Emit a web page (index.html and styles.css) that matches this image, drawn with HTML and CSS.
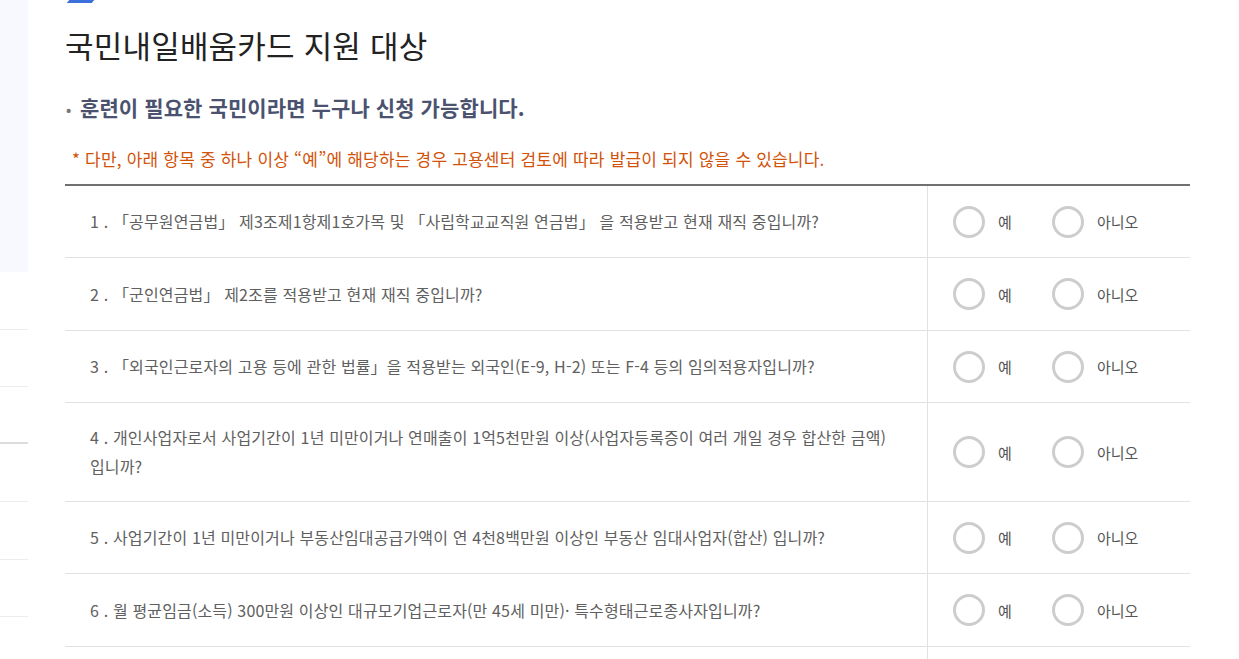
FILE: index.html
```html
<!DOCTYPE html>
<html lang="ko">
<head>
<meta charset="utf-8">
<title>국민내일배움카드 지원 대상</title>
<link rel="stylesheet" href="styles.css">
</head>
<body>
<div class="page">
  <aside class="side">
    <div class="side-top"></div>
    <div class="side-item"></div>
    <div class="side-item side-item--short"></div>
    <div class="side-item side-item--strong"></div>
    <div class="side-item"></div>
    <div class="side-item"></div>
    <div class="side-item side-item--short"></div>
    <div class="side-item"></div>
  </aside>
  <main class="main">
    <div class="deco"></div>
    <h1 class="title">국민내일배움카드 지원 대상</h1>
    <p class="lead"><span class="dot">•</span>훈련이 필요한 국민이라면 누구나 신청 가능합니다.</p>
    <p class="note">* 다만, 아래 항목 중 하나 이상 “예”에 해당하는 경우 고용센터 검토에 따라 발급이 되지 않을 수 있습니다.</p>
    <div class="table">
      <div class="row">
        <div class="q">1 . 「공무원연금법」 제3조제1항제1호가목 및 「사립학교교직원 연금법」 을 적용받고 현재 재직 중입니까?</div>
        <div class="a"><label class="opt"><span class="circle"></span>예</label><label class="opt"><span class="circle"></span>아니오</label></div>
      </div>
      <div class="row row--tall">
        <div class="q">2 . 「군인연금법」 제2조를 적용받고 현재 재직 중입니까?</div>
        <div class="a"><label class="opt"><span class="circle"></span>예</label><label class="opt"><span class="circle"></span>아니오</label></div>
      </div>
      <div class="row">
        <div class="q">3 . 「외국인근로자의 고용 등에 관한 법률」을 적용받는 외국인(E-9, H-2) 또는 F-4 등의 임의적용자입니까?</div>
        <div class="a"><label class="opt"><span class="circle"></span>예</label><label class="opt"><span class="circle"></span>아니오</label></div>
      </div>
      <div class="row">
        <div class="q">4 . 개인사업자로서 사업기간이 1년 미만이거나 연매출이 1억5천만원 이상(사업자등록증이 여러 개일 경우 합산한 금액) 입니까?</div>
        <div class="a"><label class="opt"><span class="circle"></span>예</label><label class="opt"><span class="circle"></span>아니오</label></div>
      </div>
      <div class="row">
        <div class="q">5 . 사업기간이 1년 미만이거나 부동산임대공급가액이 연 4천8백만원 이상인 부동산 임대사업자(합산) 입니까?</div>
        <div class="a"><label class="opt"><span class="circle"></span>예</label><label class="opt"><span class="circle"></span>아니오</label></div>
      </div>
      <div class="row row--tall">
        <div class="q">6 . 월 평균임금(소득) 300만원 이상인 대규모기업근로자(만 45세 미만)· 특수형태근로종사자입니까?</div>
        <div class="a"><label class="opt"><span class="circle"></span>예</label><label class="opt"><span class="circle"></span>아니오</label></div>
      </div>
      <div class="row">
        <div class="q">7 . 월 평균임금(소득) 250만원 이상인 중소기업 근로자(만 45세 미만) 입니까?</div>
        <div class="a"><label class="opt"><span class="circle"></span>예</label><label class="opt"><span class="circle"></span>아니오</label></div>
      </div>
    </div>
  </main>
</div>
</body>
</html>
```

FILE: styles.css
```css
* { box-sizing: border-box; }
html, body { margin: 0; padding: 0; background: #fff; }
body {
  font-family: "Noto Sans CJK KR", "Noto Sans", sans-serif;
  color: #222;
  overflow-x: hidden;
}
.page { display: flex; align-items: flex-start; }
.side { width: 28px; flex: none; }
.side-top { height: 272px; background: #f7f9fe; }
.side-item { height: 58px; border-bottom: 1px solid #ececec; }
.side-item--short { height: 57px; }
.side-item--strong { border-bottom: 2px solid #dcdcdc; height: 57px; }

.main { width: 1162px; padding-left: 37px; }
.deco {
  width: 25px; height: 3px; background: #3b6fdc;
  margin-left: 3px; transform: skewX(-40deg);
}
.title {
  margin: 20px 0 0; font-size: 31px; font-weight: 400;
  line-height: 44px; letter-spacing: 0.2px; color: #222;
}
.lead {
  margin: 25px 0 0; font-size: 21px; font-weight: 700;
  line-height: 30px; letter-spacing: 0.1px; color: #4b5270;
  display: flex; align-items: center;
}
.dot {
  font-size: 14px; line-height: 14px; color: #777;
  width: 14px; margin-left: 1px; margin-top: 3px;
}
.note {
  margin: 24px 0 0 7px; font-size: 17px; line-height: 26px;
  color: #d2520a; letter-spacing: 0.2px;
}
.table { margin-top: 12px; border-top: 2px solid #707070; }
.row {
  display: flex; align-items: stretch; min-height: 72px;
  border-bottom: 1px solid #e2e2e2;
}
.row--tall { min-height: 73px; }
.q {
  flex: 1; padding: 20px 30px 20px 25px; display: flex; align-items: center;
  font-size: 16px; line-height: 29px; color: #606060;
  letter-spacing: 0.15px; word-break: keep-all;
}
.a {
  width: 263px; flex: none; border-left: 1px solid #e2e2e2;
  display: flex; align-items: center; padding-left: 25px;
}
.opt {
  width: 99px; display: flex; align-items: center;
  font-size: 15px; color: #555;
}
.circle {
  width: 32px; height: 32px; border: 3px solid #cdcdcd; border-radius: 50%;
  margin-right: 13px; flex: none;
}
```
